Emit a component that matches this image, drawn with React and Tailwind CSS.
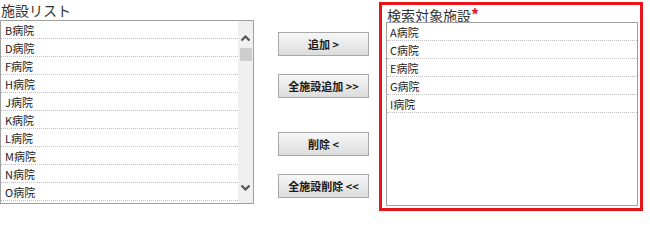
import React from "react";

const leftItems = ["B病院", "D病院", "F病院", "H病院", "J病院", "K病院", "L病院", "M病院", "N病院", "O病院"];
const rightItems = ["A病院", "C病院", "E病院", "G病院", "I病院"];

const font = { fontFamily: '"Noto Sans CJK JP", "Noto Sans", sans-serif' };

const Row = ({ label, pad }) => (
  <div className={`h-[18px] flex items-center ${pad} pt-[1px] text-[11px] leading-none text-[#1a1a1a] border-b border-dotted border-[#bdbdbd]`}>
    {label}
  </div>
);

const Btn = ({ children, className = "" }) => (
  <button
    className={`w-[91px] h-[24px] border border-[#a8a8a8] bg-gradient-to-b from-[#f7f7f7] to-[#dcdcdc] text-[11px] font-bold text-[#1a1a1a] leading-none ${className}`}
  >
    {children}
  </button>
);

const App = () => {
  return (
    <div className="w-[650px] h-[218px] bg-white flex" style={font}>
      {/* left list */}
      <div className="w-[254px] flex flex-col">
        <div className="h-[20px] pl-[1px] text-[14px] leading-[20px] text-[#333]">施設リスト</div>
        <div className="h-[184px] border border-[#a0a0a0] flex overflow-hidden">
          <div className="flex-1 overflow-hidden">
            {leftItems.map((it) => (
              <Row key={it} label={it} pad="pl-[4px]" />
            ))}
          </div>
          <div className="w-[15px] bg-[#f0f0f0] flex flex-col items-center">
            <svg width="11" height="8" viewBox="0 0 11 8" className="mt-[13px]">
              <path d="M1.5 6.5 L5.5 2.5 L9.5 6.5" fill="none" stroke="#555" strokeWidth="2.2" />
            </svg>
            <div className="w-[12px] h-[13px] bg-[#cdcdcd] mt-[6px]" />
            <div className="flex-1" />
            <svg width="11" height="8" viewBox="0 0 11 8" className="mb-[11px]">
              <path d="M1.5 1.5 L5.5 5.5 L9.5 1.5" fill="none" stroke="#555" strokeWidth="2.2" />
            </svg>
          </div>
        </div>
      </div>

      {/* buttons */}
      <div className="w-[125px] flex flex-col pl-[24px] pt-[32px]">
        <Btn>追加 &gt;</Btn>
        <Btn className="mt-[18px]">全施設追加 &gt;&gt;</Btn>
        <Btn className="mt-[34px]">削除 &lt;</Btn>
        <Btn className="mt-[18px]">全施設削除 &lt;&lt;</Btn>
      </div>

      {/* right list */}
      <div className="mt-[2px] w-[264px] h-[209px] border-[3px] border-[#e8141c] flex flex-col pl-[4px] pr-[2px] pb-[2px]">
        <div className="h-[17px] pl-[1px] text-[14px] leading-[18px] text-[#333]">
          検索対象施設<span className="text-[#e8141c] font-bold text-[16px]">*</span>
        </div>
        <div className="flex-1 border border-[#a0a0a0]">
          {rightItems.map((it) => (
            <Row key={it} label={it} pad="pl-[3px]" />
          ))}
        </div>
      </div>
    </div>
  );
};

export default App;
